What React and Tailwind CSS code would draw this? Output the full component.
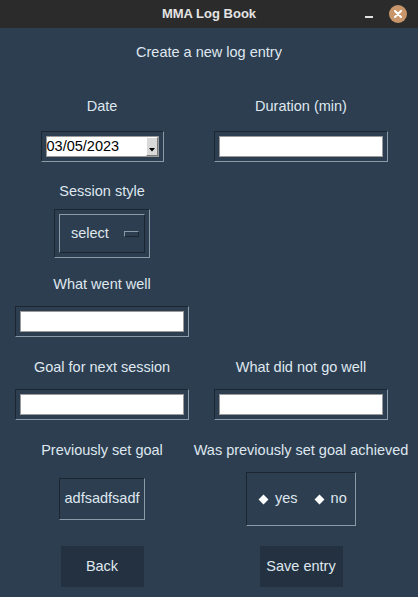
import React from "react";

const font = { fontFamily: '"Liberation Sans", Arial, sans-serif' };

function Label({ children }) {
  return (
    <div className="h-[18px] leading-[18px] text-[14.5px] text-[#dfe7ef] whitespace-nowrap text-center">
      {children}
    </div>
  );
}

function EntryField({ width = "w-[174px]", children }) {
  return (
    <div
      className={`${width} h-[31px] p-[4px] border border-t-[#1b2632] border-l-[#1b2632] border-b-[#8c9aa8] border-r-[#8c9aa8]`}
    >
      <div className="h-full w-full bg-white border border-[#9a9a9a] flex items-center">
        {children}
      </div>
    </div>
  );
}

function Col({ left, children, className = "" }) {
  return (
    <div
      className={`${left ? "w-[204px]" : "w-[194px]"} flex flex-col items-center ${className}`}
    >
      {children}
    </div>
  );
}

export default function App() {
  return (
    <div className="w-[418px] h-[597px] bg-[#2d3e50] overflow-hidden" style={font}>
      {/* title bar */}
      <div className="h-[28px] bg-[#2b2b2b] relative flex items-center justify-center">
        <span className="text-[13px] font-bold text-[#e4e4e4]">MMA Log Book</span>
        <div className="absolute left-[365px] top-[16px] w-[8px] h-[2px] bg-[#e0e0e0]" />
        <div className="absolute left-[389px] top-[5px] w-[18px] h-[18px] rounded-full bg-[#c9966c] flex items-center justify-center">
          <svg width="8" height="8" viewBox="0 0 8 8">
            <path d="M1 1 L7 7 M7 1 L1 7" stroke="#fff" strokeWidth="2" strokeLinecap="round" />
          </svg>
        </div>
      </div>

      <div className="mt-[15px]">
        <Label>Create a new log entry</Label>
      </div>

      {/* date / duration */}
      <div className="flex mt-[36px]">
        <Col left>
          <Label>Date</Label>
        </Col>
        <Col>
          <Label>Duration (min)</Label>
        </Col>
      </div>
      <div className="flex mt-[16px]">
        <Col left>
          <EntryField width="w-[123px]">
            <span className="flex-1 text-[14.5px] text-black leading-none">03/05/2023</span>
            <div className="w-[12px] h-[19px] bg-[#d9d9d9] border border-t-white border-l-white border-b-[#7a7a7a] border-r-[#7a7a7a] flex items-end justify-center pb-[3px]">
              <svg width="6" height="4" viewBox="0 0 6 4">
                <path d="M0 0 L6 0 L3 3.5 Z" fill="#000" />
              </svg>
            </div>
          </EntryField>
        </Col>
        <Col>
          <EntryField />
        </Col>
      </div>

      {/* session style */}
      <div className="flex mt-[20px]">
        <Col left>
          <Label>Session style</Label>
          <div className="mt-[9px] w-[96px] h-[49px] p-[4px] border border-t-[#1b2632] border-l-[#1b2632] border-b-[#8c9aa8] border-r-[#8c9aa8]">
            <div className="h-full w-full border border-t-[#8c9aa8] border-l-[#8c9aa8] border-b-[#1b2632] border-r-[#1b2632] flex items-center pl-[11px]">
              <span className="text-[14.5px] text-[#dfe7ef]">select</span>
              <div className="ml-[15px] w-[15px] h-[6px] border border-t-[#8c9aa8] border-l-[#8c9aa8] border-b-[#1b2632] border-r-[#1b2632] bg-[#2d3e50]" />
            </div>
          </div>
        </Col>
      </div>

      {/* what went well */}
      <div className="flex mt-[17px]">
        <Col left>
          <Label>What went well</Label>
          <div className="mt-[13px]">
            <EntryField />
          </div>
        </Col>
      </div>

      {/* goal / not well */}
      <div className="flex mt-[21px]">
        <Col left>
          <Label>Goal for next session</Label>
          <div className="mt-[13px]">
            <EntryField />
          </div>
        </Col>
        <Col>
          <Label>What did not go well</Label>
          <div className="mt-[13px]">
            <EntryField />
          </div>
        </Col>
      </div>

      {/* previous goal */}
      <div className="flex mt-[21px]">
        <Col left>
          <Label>Previously set goal</Label>
        </Col>
        <Col>
          <Label>Was previously set goal achieved</Label>
        </Col>
      </div>
      <div className="flex mt-[13px] h-[54px] items-center">
        <Col left>
          <div className="w-[86px] h-[42px] border border-t-[#1b2632] border-l-[#1b2632] border-b-[#8c9aa8] border-r-[#8c9aa8] flex items-center justify-center">
            <span className="text-[14.5px] text-[#dfe7ef]">adfsadfsadf</span>
          </div>
        </Col>
        <Col>
          <div className="w-[110px] h-[54px] border border-t-[#1b2632] border-l-[#1b2632] border-b-[#8c9aa8] border-r-[#8c9aa8] flex items-center pl-[13px]">
            <div className="w-[7px] h-[7px] bg-white rotate-45" />
            <span className="ml-[8px] text-[14.5px] text-[#dfe7ef]">yes</span>
            <div className="ml-[18px] w-[7px] h-[7px] bg-white rotate-45" />
            <span className="ml-[8px] text-[14.5px] text-[#dfe7ef]">no</span>
          </div>
        </Col>
      </div>

      {/* buttons */}
      <div className="flex mt-[20px]">
        <Col left>
          <button className="w-[83px] h-[41px] bg-[#233140] text-[14.5px] text-[#dfe7ef]">Back</button>
        </Col>
        <Col>
          <button className="w-[83px] h-[41px] bg-[#233140] text-[14.5px] text-[#dfe7ef]">Save entry</button>
        </Col>
      </div>
    </div>
  );
}
